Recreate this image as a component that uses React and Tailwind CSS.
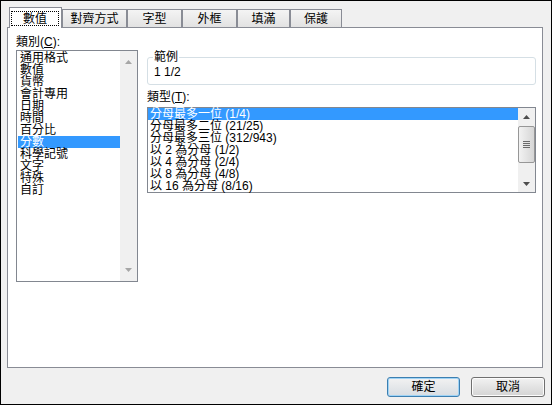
import { useState } from 'react'

const categories = ['通用格式', '數值', '貨幣', '會計專用', '日期', '時間', '百分比', '分數', '科學記號', '文字', '特殊', '自訂']
const types = [
  '分母最多一位 (1/4)',
  '分母最多二位 (21/25)',
  '分母最多三位 (312/943)',
  '以 2 為分母 (1/2)',
  '以 4 為分母 (2/4)',
  '以 8 為分母 (4/8)',
  '以 16 為分母 (8/16)',
]
const tabs = [
  { t: '對齊方式', w: 'w-[65px]' },
  { t: '字型', w: 'w-[55px]' },
  { t: '外框', w: 'w-[55px]' },
  { t: '填滿', w: 'w-[53px]' },
  { t: '保護', w: 'w-[52px]' },
]

function Arrow({ up, color }) {
  return (
    <svg width="7" height="4" viewBox="0 0 7 4">
      <path d={up ? 'M3.5 0 L7 4 L0 4 Z' : 'M0 0 L7 0 L3.5 4 Z'} fill={color} />
    </svg>
  )
}

export default function App() {
  const [cat, setCat] = useState(7)
  const [type, setType] = useState(0)

  return (
    <div className="flex h-[405px] w-[552px] flex-col border border-black bg-[#f0f0f0] text-[12px] leading-[12px] text-black [font-family:'Liberation_Sans','Noto_Sans_CJK_TC',sans-serif]">
      {/* 탭 */}
      <div className="flex h-[26px] items-end pl-[8px]">
        <div className="relative z-10 mb-[-1px] flex h-[21px] w-[53px] items-start border border-b-0 border-[#898c95] bg-white">
          <span className="ml-[1px] mt-[3px] flex h-[15px] w-[48px] items-center justify-center border border-dotted border-black">數值</span>
        </div>
        {tabs.map((x) => (
          <div key={x.t}
            className={`flex h-[18px] ${x.w} items-center justify-center border border-b-0 border-[#898c95] bg-gradient-to-b from-[#f4f4f4] to-[#e2e2e2]`}>
            {x.t}
          </div>
        ))}
      </div>

      {/* 패널 */}
      <div className="ml-[6px] flex h-[341px] w-[536px] border border-[#898c95] bg-white">
        <div className="pl-[8px] pt-[8px]">
          <div className="h-[12px]">類別(<span className="underline">C</span>):</div>
          <div className="mt-[2px] flex h-[232px] w-[122px] border border-[#828790]">
            <div className="flex-1 pl-[1px] pt-[1px]">
              {categories.map((c, i) => (
                <div key={c} onClick={() => setCat(i)}
                  className={`h-[12px] whitespace-nowrap pl-[2px] ${i === cat ? 'bg-[#3399ff] text-white' : ''}`}>
                  {c}
                </div>
              ))}
            </div>
            <div className="flex w-[17px] flex-col items-center justify-between bg-[#f0f0f0] py-[9px]">
              <Arrow up color="#a6a6a6" />
              <Arrow color="#a6a6a6" />
            </div>
          </div>
        </div>

        <div className="ml-[9px] w-[389px] pt-[23px]">
          <fieldset className="rounded-[3px] border border-[#d5dfe5] pb-[6px] pl-[5px]">
            <legend className="px-[1px]">範例</legend>
            <div className="mt-[3px] pl-[1px]">1 1/2</div>
          </fieldset>
          <div className="mt-[6px] h-[12px]">類型(<span className="underline">T</span>):</div>
          <div className="mt-[4px] flex h-[86px] border border-[#828790]">
            <div className="flex-1">
              {types.map((t, i) => (
                <div key={t} onClick={() => setType(i)}
                  className={`h-[12px] whitespace-nowrap pl-[2px] ${i === type ? 'bg-[#3399ff] text-white' : ''}`}>
                  {t}
                </div>
              ))}
            </div>
            <div className="flex w-[17px] flex-col bg-[#f0f0f0]">
              <div className="flex h-[17px] items-center justify-center"><Arrow up color="#4d4d4d" /></div>
              <div className="mt-[1px] flex h-[37px] flex-col items-center justify-center gap-[1px] rounded-[2px] border border-[#979797] bg-gradient-to-r from-[#f2f2f2] to-[#d6d6d6]">
                <span className="h-px w-[7px] bg-[#6b6b6b]" />
                <span className="h-px w-[7px] bg-[#6b6b6b]" />
                <span className="h-px w-[7px] bg-[#6b6b6b]" />
                <span className="h-px w-[7px] bg-[#6b6b6b]" />
              </div>
              <div className="flex flex-1 items-end justify-center pb-[6px]"><Arrow color="#4d4d4d" /></div>
            </div>
          </div>
        </div>
      </div>

      {/* 버튼 */}
      <div className="mt-[9px] flex justify-end gap-[11px] pr-[6px]">
        <button className="h-[20px] w-[73px] rounded-[3px] border border-[#3c7fb1] bg-gradient-to-b from-[#f2f2f2] to-[#d8dde2] shadow-[inset_0_0_0_1px_#9fd3f5]">確定</button>
        <button className="h-[20px] w-[74px] rounded-[3px] border border-[#707070] bg-gradient-to-b from-[#f2f2f2] to-[#d4d4d4] shadow-[inset_0_0_0_1px_#fcfcfc]">取消</button>
      </div>
    </div>
  )
}
